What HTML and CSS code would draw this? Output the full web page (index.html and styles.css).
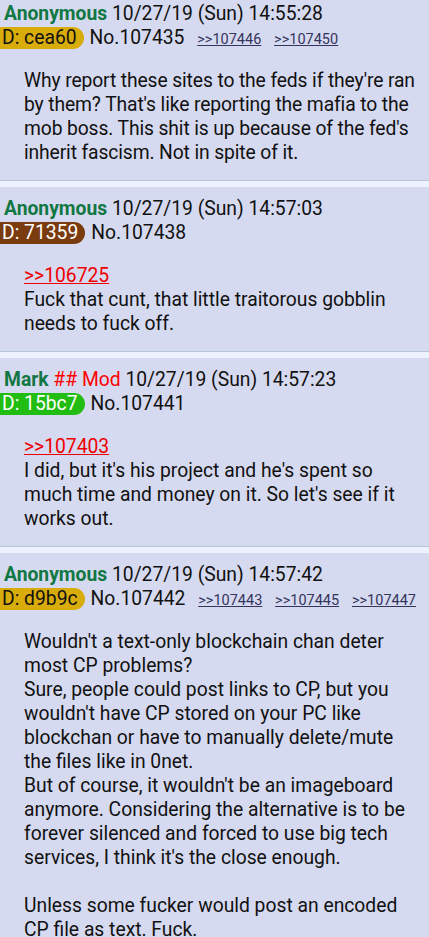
FILE: index.html
```html
<!doctype html>
<html>

<head>
	<link rel="stylesheet" href="styles.css">
</head>

<body>
	<div class="thread">
		<div class="post">
			<div class="postinfo">
				<span class="name">Anonymous</span> <span class="date">10/27/19 (Sun) 14:55:28</span>
			</div>
			<div class="postinfo">
				<span class="posterid gold">D: cea60</span><span class="postnum">No.107435</span>
				<a class="backlink" href="#">&gt;&gt;107446</a>
				<a class="backlink" href="#">&gt;&gt;107450</a>
			</div>
			<blockquote class="message tight">Why report these sites to the feds if they're ran by them? That's like reporting the mafia to the mob boss. This shit is up because of the fed's inherit fascism. Not in spite of it.</blockquote>
		</div>

		<div class="post">
			<div class="postinfo">
				<span class="name">Anonymous</span> <span class="date">10/27/19 (Sun) 14:57:03</span>
			</div>
			<div class="postinfo">
				<span class="posterid brown">D: 71359</span><span class="postnum">No.107438</span>
			</div>
			<blockquote class="message"><a class="quotelink" href="#">&gt;&gt;106725</a><br>Fuck that cunt, that little traitorous gobblin needs to fuck off.</blockquote>
		</div>

		<div class="post">
			<div class="postinfo">
				<span class="name">Mark</span> <span class="capcode">## Mod</span> <span class="date">10/27/19 (Sun) 14:57:23</span>
			</div>
			<div class="postinfo">
				<span class="posterid green">D: 15bc7</span><span class="postnum">No.107441</span>
			</div>
			<blockquote class="message"><a class="quotelink" href="#">&gt;&gt;107403</a><br>I did, but it's his project and he's spent so much time and money on it. So let's see if it works out.</blockquote>
		</div>

		<div class="post">
			<div class="postinfo">
				<span class="name">Anonymous</span> <span class="date">10/27/19 (Sun) 14:57:42</span>
			</div>
			<div class="postinfo">
				<span class="posterid gold">D: d9b9c</span><span class="postnum">No.107442</span>
				<a class="backlink" href="#">&gt;&gt;107443</a>
				<a class="backlink" href="#">&gt;&gt;107445</a>
				<a class="backlink" href="#">&gt;&gt;107447</a>
			</div>
			<blockquote class="message">Wouldn't a text-only blockchain chan deter most CP problems?<br>Sure, people could post links to CP, but you wouldn't have CP stored on your PC like blockchan or have to manually delete/mute the files like in 0net.<br>But of course, it wouldn't be an imageboard anymore. Considering the alternative is to be forever silenced and forced to use big tech services, I think it's the close enough.<br><br>Unless some fucker would post an encoded CP file as text. Fuck.</blockquote>
		</div>
	</div>
</body>

</html>
```

FILE: styles.css
```css
body {
	margin: 0;
	background: #eef2ff;
	font-family: Roboto, "Liberation Sans", sans-serif;
	font-size: 19.3px;
	line-height: 24px;
	color: #111;
	overflow: hidden;
}

.thread {
	margin-top: -8px;
}

.post {
	background: #d6daf0;
	border-bottom: 1px solid #b7c5d9;
	margin-bottom: 6px;
	padding: 10px 9px 15px 4px;
}

.postinfo {
	height: 24px;
	white-space: nowrap;
}

.name {
	color: #117743;
	font-weight: bold;
}

.capcode {
	color: #f00;
}

.posterid {
	display: inline-block;
	height: 22px;
	line-height: 22px;
	margin-left: -4px;
	padding: 0 7px 0 2px;
	border-radius: 0 11px 11px 0;
	margin-right: 6px;
}

.posterid.gold {
	background: #d8ac0a;
	color: #111;
}

.posterid.brown {
	background: #7a3b0e;
	color: #fff;
}

.posterid.green {
	background: #22bd12;
	color: #fff;
}

.backlink {
	color: #34345c;
	font-size: 14.5px;
	margin-left: 8px;
}

.quotelink {
	color: #e00;
}

.message {
	margin: 19px 0 0 20px;
}

.message.tight {
	letter-spacing: -0.12px;
}
```
